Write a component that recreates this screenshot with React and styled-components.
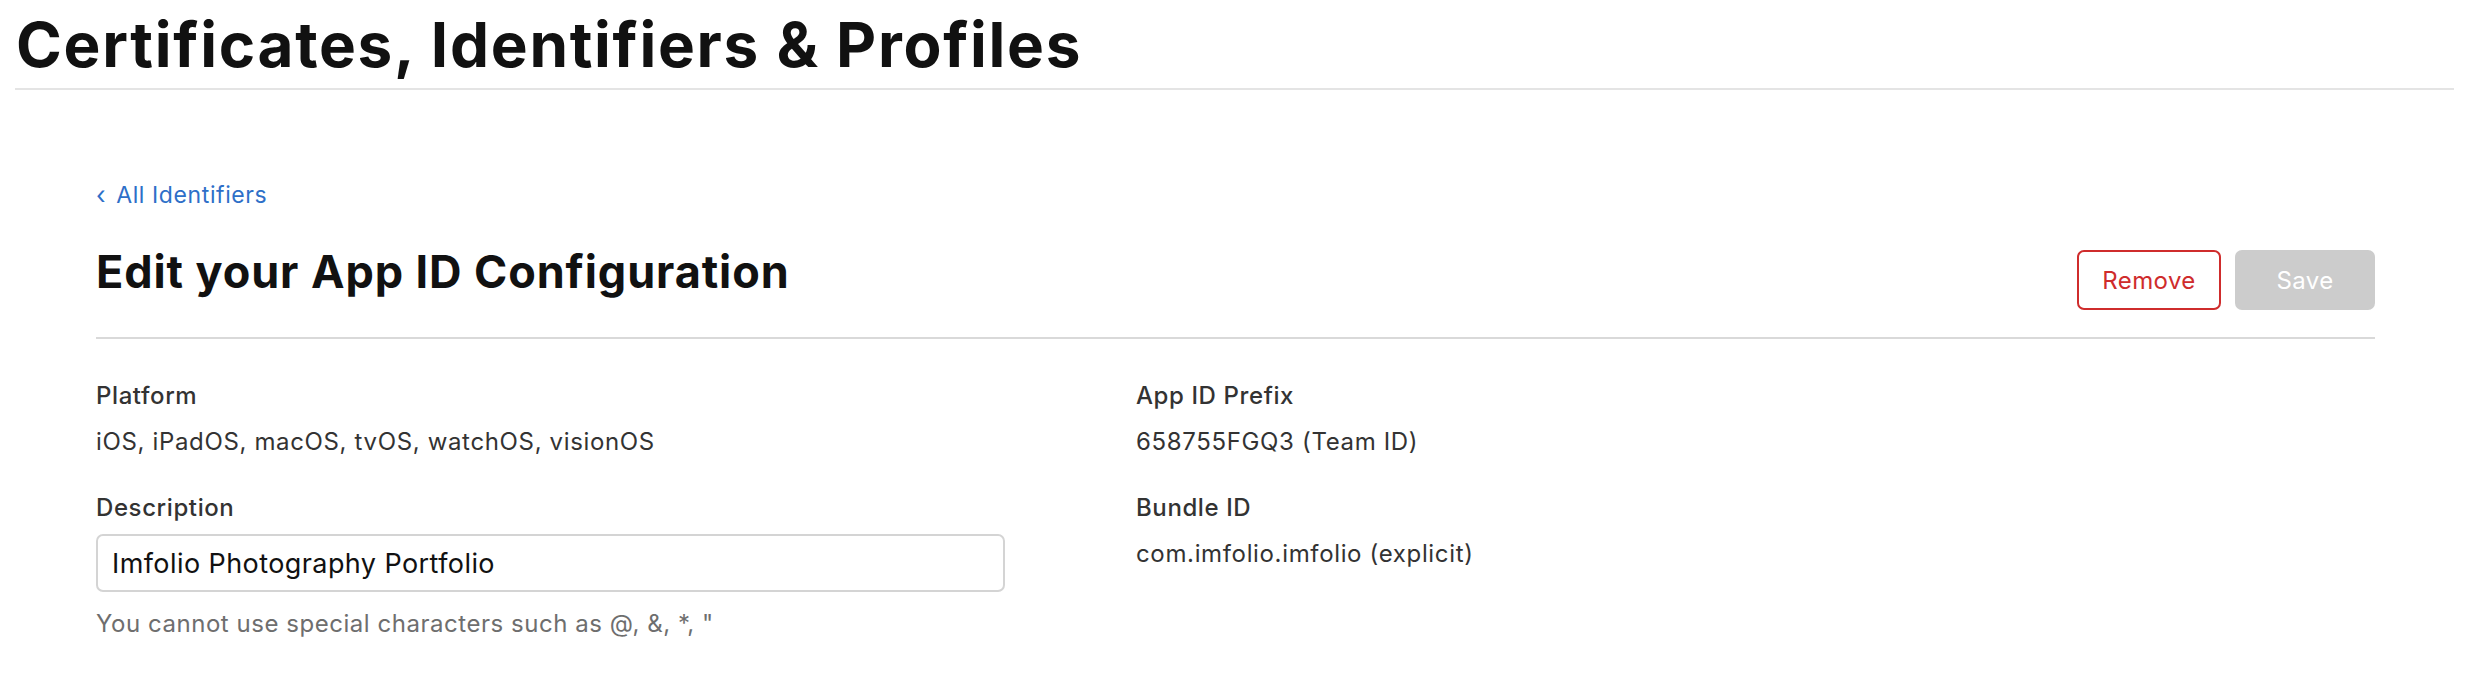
import React from 'react';
import styled, { createGlobalStyle } from 'styled-components';

const GlobalStyle = createGlobalStyle`
  html, body {
    margin: 0;
    padding: 0;
    background: #fff;
  }
  body {
    font-family: Inter, "Noto Sans", "Liberation Sans", sans-serif;
    color: #333;
  }
`;

const Page = styled.div`
  width: 2468px;
  min-height: 684px;
`;

const TopBar = styled.header`
  margin: 0 14px 0 15px;
  padding-top: 14px;
  padding-bottom: 12px;
  border-bottom: 2px solid #e4e4e4;
`;

const SiteTitle = styled.h1`
  margin: 0 0 0 1px;
  font-size: 62px;
  line-height: 62px;
  font-weight: 700;
  color: #111;
  letter-spacing: 1.7px;
`;

const Content = styled.main`
  margin: 0 93px 0 96px;
  padding-top: 90px;
`;

const BackLink = styled.a`
  display: inline-flex;
  align-items: center;
  gap: 10px;
  font-size: 23px;
  line-height: 30px;
  letter-spacing: 0.6px;
  color: #2e6fc8;
  text-decoration: none;
  cursor: pointer;
`;

const Chevron = styled.span`
  font-size: 25px;
  line-height: 30px;
`;

const HeaderRow = styled.div`
  display: flex;
  align-items: flex-start;
  justify-content: space-between;
  margin-top: 32px;
  padding-bottom: 27px;
  border-bottom: 2px solid #d9d9d9;
`;

const PageTitle = styled.h2`
  margin: 0;
  font-size: 45px;
  line-height: 60px;
  font-weight: 700;
  color: #111;
  letter-spacing: 0.9px;
`;

const Actions = styled.div`
  display: flex;
  gap: 14px;
  margin-top: 8px;
`;

const Button = styled.button`
  box-sizing: border-box;
  height: 60px;
  width: ${(p) => (p.$danger ? '144px' : '140px')};
  border-radius: 7px;
  font-family: inherit;
  font-size: 24px;
  letter-spacing: 0.4px;
  border: ${(p) => (p.$danger ? '2px solid #cf2c2c' : 'none')};
  background: ${(p) => (p.$danger ? '#fff' : '#cccccc')};
  color: ${(p) => (p.$danger ? '#cf2c2c' : '#fff')};
  cursor: ${(p) => (p.disabled ? 'default' : 'pointer')};
`;

const Grid = styled.div`
  display: grid;
  grid-template-columns: 1040px 1fr;
  padding-top: 41px;
`;

const Column = styled.div`
  display: flex;
  flex-direction: column;
`;

const Field = styled.div`
  display: flex;
  flex-direction: column;
  margin-bottom: 34px;
`;

const Label = styled.div`
  font-size: 24px;
  line-height: 32px;
  font-weight: 500;
  letter-spacing: 0.6px;
  color: #333;
`;

const Value = styled.div`
  margin-top: 14px;
  font-size: 24px;
  line-height: 32px;
  letter-spacing: 0.65px;
  color: #333;
`;

const TextInput = styled.input`
  box-sizing: border-box;
  margin-top: 10px;
  width: 909px;
  height: 58px;
  padding: 0 14px;
  border: 2px solid #d4d4d4;
  border-radius: 7px;
  font-family: inherit;
  font-size: 27px;
  letter-spacing: 0.42px;
  color: #111;
  outline: none;
`;

const Hint = styled.div`
  margin-top: 16px;
  font-size: 24px;
  line-height: 32px;
  letter-spacing: 0.54px;
  color: #6e6e6e;
`;

export default function App() {
  return (
    <Page>
      <GlobalStyle />
      <TopBar>
        <SiteTitle>Certificates, Identifiers &amp; Profiles</SiteTitle>
      </TopBar>
      <Content>
        <BackLink>
          <Chevron>‹</Chevron>
          All Identifiers
        </BackLink>
        <HeaderRow>
          <PageTitle>Edit your App ID Configuration</PageTitle>
          <Actions>
            <Button type="button" $danger>
              Remove
            </Button>
            <Button type="button" disabled>
              Save
            </Button>
          </Actions>
        </HeaderRow>
        <Grid>
          <Column>
            <Field>
              <Label>Platform</Label>
              <Value>iOS, iPadOS, macOS, tvOS, watchOS, visionOS</Value>
            </Field>
            <Field>
              <Label>Description</Label>
              <TextInput defaultValue="Imfolio Photography Portfolio" />
              <Hint>You cannot use special characters such as @, &amp;, *, "</Hint>
            </Field>
          </Column>
          <Column>
            <Field>
              <Label>App ID Prefix</Label>
              <Value>658755FGQ3 (Team ID)</Value>
            </Field>
            <Field>
              <Label>Bundle ID</Label>
              <Value>com.imfolio.imfolio (explicit)</Value>
            </Field>
          </Column>
        </Grid>
      </Content>
    </Page>
  );
}
